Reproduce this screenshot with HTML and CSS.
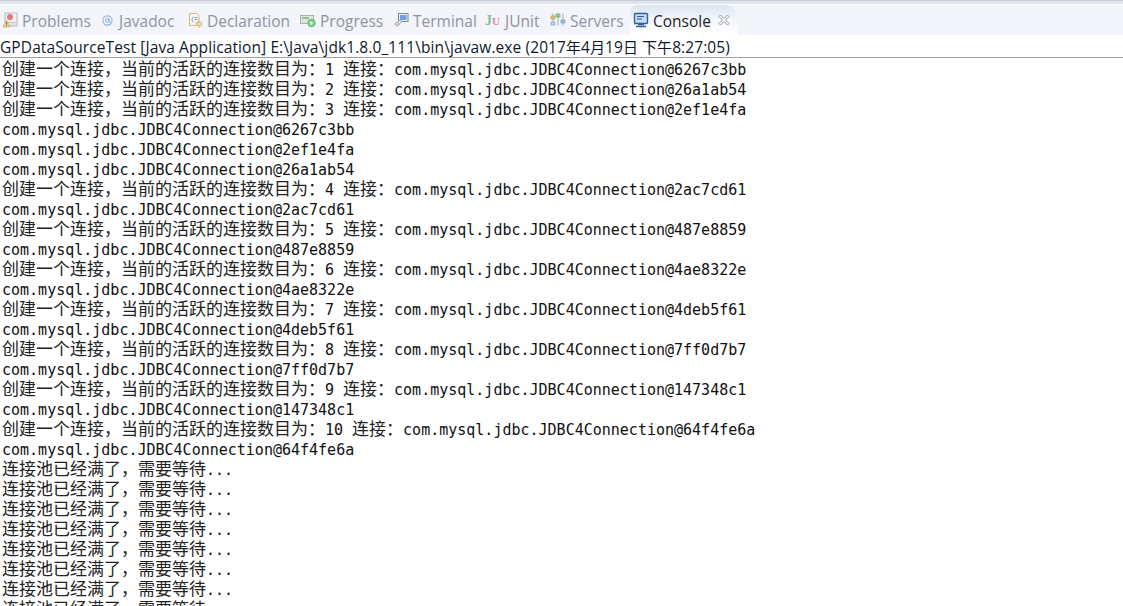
FILE: index.html
```html
<!DOCTYPE html>
<html lang="zh-CN">
<head>
<meta charset="utf-8">
<title>Console</title>
<link rel="stylesheet" href="styles.css">
</head>
<body>
<div class="app">
  <div class="top-edge"></div>
  <div class="tabbar">
    <div class="tab tab-problems">
      <svg class="icon" viewBox="0 0 16 16"><rect x="3" y="1" width="12" height="13" fill="#eef0f2" stroke="#b3bcc6"/><path d="M3.5 10.5h11M9 10v4M12 10v4" stroke="#c3cad2" fill="none"/><circle cx="8" cy="5" r="3" fill="#e8767c"/><path d="M4.5 8 8 15H1z" fill="#ecd28c" stroke="#cba95c" stroke-width=".7"/><path d="M4.5 10.2v2.4M4.5 13.3v.8" stroke="#8a6a2a"/></svg>
      <span>Problems</span>
    </div>
    <div class="tab tab-javadoc">
      <svg class="icon" viewBox="0 0 16 16"><circle cx="8.5" cy="8.5" r="4.6" fill="none" stroke="#8db4d8" stroke-width="1.1"/><circle cx="8.3" cy="8.5" r="1.8" fill="none" stroke="#8db4d8" stroke-width="1.1"/><path d="M10.2 6.5v3.2q.2 1.3 1.6 1" stroke="#8db4d8" fill="none"/></svg>
      <span>Javadoc</span>
    </div>
    <div class="tab tab-declaration">
      <svg class="icon" viewBox="0 0 16 16"><path d="M2.5 1.500h7l2.500 2.500v6M2.500 1.500v12h6" fill="#fbf8ef" stroke="#cdb98c"/><path d="M6.500 5q-1 0-1 1.200t-1 1.300q1 0 1 1.300t1 1.200M7.500 5.500h3M7.500 7.500h3" stroke="#8ba9cc" fill="none"/><path d="M9 10.500h3V8.500l3.500 3.500-3.500 3.500v-2H9z" fill="#f0dcae" stroke="#c9a868" stroke-width=".8"/></svg>
      <span>Declaration</span>
    </div>
    <div class="tab tab-progress">
      <svg class="icon" viewBox="0 0 16 16"><rect x=".5" y="3.500" width="13" height="8" fill="#dfe6dc" stroke="#a5b4a0"/><rect x="2" y="5" width="7" height="2" fill="#8cc68c"/><circle cx="11.500" cy="11" r="3.800" fill="#7fcf8f" stroke="#5bae6f" stroke-width=".7"/><path d="M10.300 9v4l3-2z" fill="#fff"/></svg>
      <span>Progress</span>
    </div>
    <div class="tab tab-terminal">
      <svg class="icon" viewBox="0 0 16 16"><rect x="5.500" y="1.500" width="9.500" height="8" fill="#eef0f5" stroke="#7d8595"/><rect x="7" y="3" width="6.500" height="5" fill="#6e9ee8"/><path d="M1.500 12 7 8l2 1.800-5 4.700z" fill="#e6e6e6" stroke="#9a9a9a" stroke-width=".8"/><path d="M3 11.500l2 2M4.500 10.500l2 2" stroke="#8c8c8c" stroke-width=".7"/></svg>
      <span>Terminal</span>
    </div>
    <div class="tab tab-junit">
      <svg class="icon" viewBox="0 0 16 16"><text class="ju-j" x="0" y="13">J</text><text class="ju-u" x="7" y="13">U</text></svg>
      <span>JUnit</span>
    </div>
    <div class="tab tab-servers">
      <svg class="icon" viewBox="0 0 16 16"><path d="M3 1.500v12M8 1.500v12M13 1.500v12" stroke="#a7adb8" fill="none"/><rect x="1" y="4" width="4" height="3" fill="#dcc26f" stroke="#a8964f" stroke-width=".6"/><rect x="6" y="2" width="4" height="3" fill="#9cc9a3" stroke="#6e9d78" stroke-width=".6"/><rect x="11" y="8" width="4" height="3" fill="#a3bde0" stroke="#7390b8" stroke-width=".6"/><rect x="1" y="10" width="4" height="3" fill="#b8d0e8" stroke="#7f9ab8" stroke-width=".6"/></svg>
      <span>Servers</span>
    </div>
    <div class="tab tab-console">
      <svg class="icon" viewBox="0 0 16 16"><rect x="1.500" y="1.500" width="13" height="10" rx="1" fill="#c9d9ee" stroke="#2f5f9e" stroke-width="1.400"/><path d="M4 4.500h7M4 7h5" stroke="#2f5f9e" stroke-width="1.200"/><path d="M5 12.500h6M3 14.500h10" stroke="#2f5f9e" stroke-width="1.400"/></svg>
      <span>Console</span>
      <svg class="close" viewBox="0 0 12 12"><path d="M1 2.500 2.500 1 6 4.500 9.500 1 11 2.500 7.500 6 11 9.500 9.500 11 6 7.500 2.500 11 1 9.500 4.500 6z" fill="#fff" stroke="#8f959c"/></svg>
    </div>
  </div>
  <div class="process">GPDataSourceTest [Java Application] E:\Java\jdk1.8.0_111\bin\javaw.exe (2017<span class="d">年</span>4<span class="d">月</span>19<span class="d">日</span> <span class="d">下午</span>8:27:05)</div>
  <div class="output">
    <div><span class="c">创建一个连接，当前的活跃的连接数目为：</span>1 <span class="c">连接：</span>com.mysql.jdbc.JDBC4Connection@6267c3bb</div>
    <div><span class="c">创建一个连接，当前的活跃的连接数目为：</span>2 <span class="c">连接：</span>com.mysql.jdbc.JDBC4Connection@26a1ab54</div>
    <div><span class="c">创建一个连接，当前的活跃的连接数目为：</span>3 <span class="c">连接：</span>com.mysql.jdbc.JDBC4Connection@2ef1e4fa</div>
    <div>com.mysql.jdbc.JDBC4Connection@6267c3bb</div>
    <div>com.mysql.jdbc.JDBC4Connection@2ef1e4fa</div>
    <div>com.mysql.jdbc.JDBC4Connection@26a1ab54</div>
    <div><span class="c">创建一个连接，当前的活跃的连接数目为：</span>4 <span class="c">连接：</span>com.mysql.jdbc.JDBC4Connection@2ac7cd61</div>
    <div>com.mysql.jdbc.JDBC4Connection@2ac7cd61</div>
    <div><span class="c">创建一个连接，当前的活跃的连接数目为：</span>5 <span class="c">连接：</span>com.mysql.jdbc.JDBC4Connection@487e8859</div>
    <div>com.mysql.jdbc.JDBC4Connection@487e8859</div>
    <div><span class="c">创建一个连接，当前的活跃的连接数目为：</span>6 <span class="c">连接：</span>com.mysql.jdbc.JDBC4Connection@4ae8322e</div>
    <div>com.mysql.jdbc.JDBC4Connection@4ae8322e</div>
    <div><span class="c">创建一个连接，当前的活跃的连接数目为：</span>7 <span class="c">连接：</span>com.mysql.jdbc.JDBC4Connection@4deb5f61</div>
    <div>com.mysql.jdbc.JDBC4Connection@4deb5f61</div>
    <div><span class="c">创建一个连接，当前的活跃的连接数目为：</span>8 <span class="c">连接：</span>com.mysql.jdbc.JDBC4Connection@7ff0d7b7</div>
    <div>com.mysql.jdbc.JDBC4Connection@7ff0d7b7</div>
    <div><span class="c">创建一个连接，当前的活跃的连接数目为：</span>9 <span class="c">连接：</span>com.mysql.jdbc.JDBC4Connection@147348c1</div>
    <div>com.mysql.jdbc.JDBC4Connection@147348c1</div>
    <div><span class="c">创建一个连接，当前的活跃的连接数目为：</span>10 <span class="c">连接：</span>com.mysql.jdbc.JDBC4Connection@64f4fe6a</div>
    <div>com.mysql.jdbc.JDBC4Connection@64f4fe6a</div>
    <div><span class="c">连接池已经满了，需要等待</span>...</div>
    <div><span class="c">连接池已经满了，需要等待</span>...</div>
    <div><span class="c">连接池已经满了，需要等待</span>...</div>
    <div><span class="c">连接池已经满了，需要等待</span>...</div>
    <div><span class="c">连接池已经满了，需要等待</span>...</div>
    <div><span class="c">连接池已经满了，需要等待</span>...</div>
    <div><span class="c">连接池已经满了，需要等待</span>...</div>
    <div><span class="c">连接池已经满了，需要等待</span>...</div>
  </div>
</div>
</body>
</html>
```
FILE: styles.css
```css
* { box-sizing: border-box; }
html, body { margin: 0; padding: 0; background: #fff; }
.app { width: 1123px; height: 606px; overflow: hidden; display: flex; flex-direction: column; }
.top-edge { height: 5px; flex: none; background: linear-gradient(#cccccc 0, #cccccc 1px, #dde4f5 1px, #dde4f5 4px, #ffffff 4px); }
.tabbar { height: 30px; flex: none; display: flex; background: #f3f5fa; font: 15.5px/28px "Open Sans", "Noto Sans", sans-serif; color: #8e93a5; }
.tab { display: flex; align-items: center; flex: none; }
.tab span { padding-top: 2px; }
.tab .icon { width: 16px; height: 16px; margin-right: 4px; flex: none; }
.tab-problems { width: 99px; padding-left: 2px; }
.tab-javadoc { width: 88px; }
.tab-declaration { width: 113px; }
.tab-progress { width: 93px; }
.tab-terminal { width: 92px; }
.tab-junit { width: 65px; }
.tab-servers { width: 80px; }
.tab-console { width: 108px; padding-left: 3px; color: #1f2328; background: linear-gradient(#dbe4f1, #f4f7fb 50%, #ffffff); border-radius: 8px 14px 0 0; }
.close { width: 12px; height: 12px; margin-left: 7px; }
.ju-j, .ju-u { font-family: "Liberation Serif", serif; font-size: 14px; font-weight: bold; }
.ju-j { fill: #7fbf94; }
.ju-u { fill: #e58a9a; font-size: 11px; }
.process { height: 22px; flex: none; font: 15.5px/24px "Open Sans", "Noto Sans CJK SC", sans-serif; letter-spacing: .1px; color: #10192b; white-space: nowrap; }
.d { font-family: "Noto Sans CJK SC", sans-serif; font-size: 15px; letter-spacing: 0; line-height: 15px; }
.output { flex: 1; min-height: 0; border-top: 1px solid #a0a0a0; padding: 2px 0 0 2px; font: 15px/20px "DejaVu Sans Mono", monospace; color: #101010; }
.output > div { height: 20px; white-space: pre; }
.c { display: inline-block; font-family: "Noto Sans CJK SC", sans-serif; font-size: 17px; line-height: 15px; color: #222; }
```
